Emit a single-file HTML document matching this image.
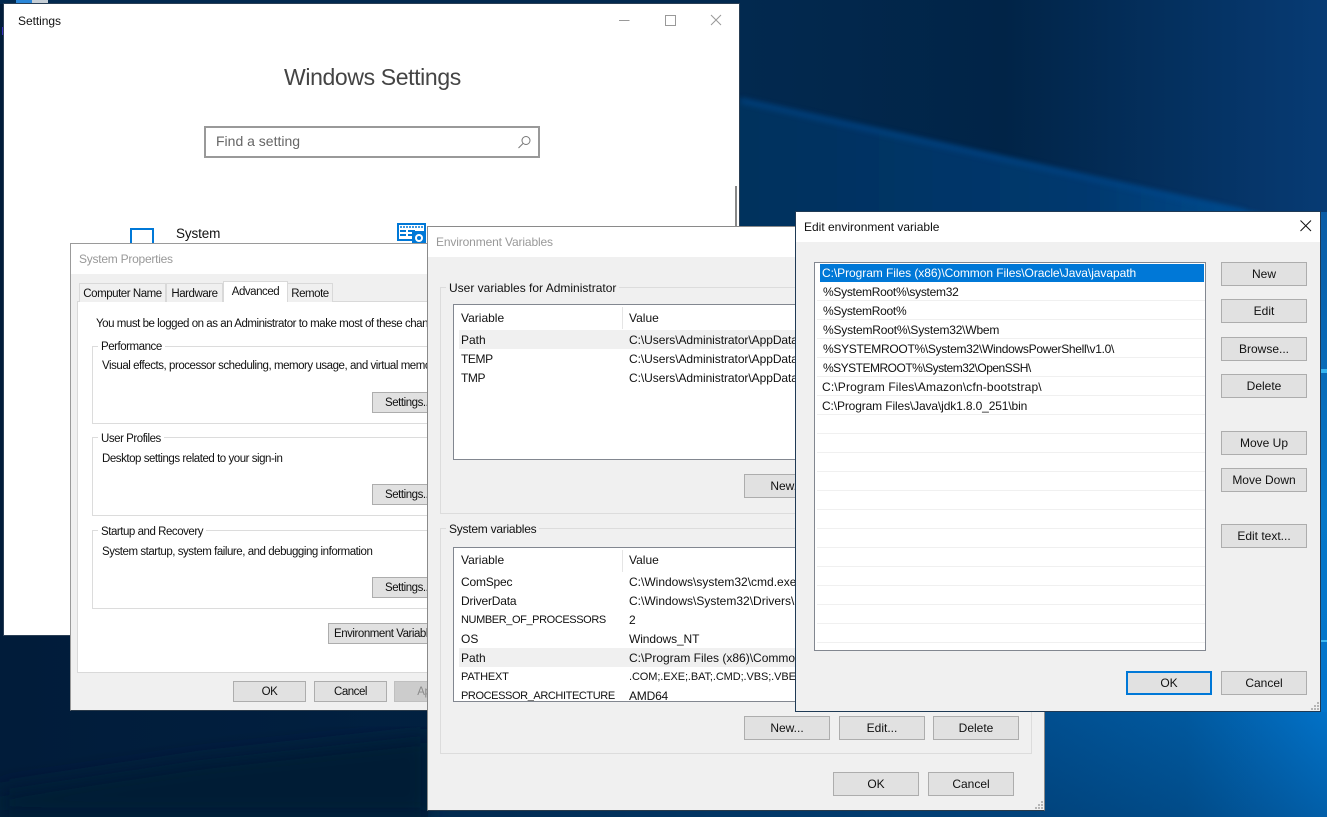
<!DOCTYPE html>
<html><head><meta charset="utf-8"><title>Windows Settings</title>
<style>
html,body{margin:0;padding:0;width:1327px;height:817px;overflow:hidden;background:#012a50}
*{box-sizing:border-box}
body{font-family:"Liberation Sans",sans-serif;font-size:12px;color:#111;position:relative}
.a{position:absolute}
.t{position:absolute;white-space:nowrap;line-height:16px;height:16px}
.win{position:absolute;background:#f0f0f0;overflow:hidden}
.btn{position:absolute;background:#e1e1e1;border:1px solid #adadad;text-align:center;white-space:nowrap;overflow:hidden;line-height:20px;color:#111}
.grp{position:absolute;border:1px solid #dcdcdc}
.lg{position:absolute;white-space:nowrap;line-height:16px;padding:0 3px;height:16px}
.list{position:absolute;background:#fff;border:1px solid #828790;overflow:hidden}
.grip{position:absolute;width:8px;height:8px;background:
 linear-gradient(#b5b5b5,#b5b5b5) 6px 0/2px 2px no-repeat,
 linear-gradient(#b5b5b5,#b5b5b5) 3px 3px/2px 2px no-repeat,
 linear-gradient(#b5b5b5,#b5b5b5) 6px 3px/2px 2px no-repeat,
 linear-gradient(#b5b5b5,#b5b5b5) 0 6px/2px 2px no-repeat,
 linear-gradient(#b5b5b5,#b5b5b5) 3px 6px/2px 2px no-repeat,
 linear-gradient(#b5b5b5,#b5b5b5) 6px 6px/2px 2px no-repeat}
.tab{position:absolute;background:#f0f0f0;border:1px solid #d9d9d9;border-bottom:0;text-align:center;line-height:18px;white-space:nowrap}
.sep{position:absolute;left:2px;width:388px;height:1px;background:#f0f0f0}
.sp .t,.sp .lg,.sp .btn,.sp .tab{font-size:11.5px;letter-spacing:-.46px}
.sp .t,.sp .lg{line-height:18px;height:18px}
.sp .lg{height:17px}
.sp .btn{line-height:21px!important}
.sp .tab{line-height:20px!important}
.sp .t.title{font-size:12px;letter-spacing:-.25px;line-height:16px;height:16px}
.cap{font-size:11px;letter-spacing:-.4px}
</style></head><body>

<svg class="a" style="left:0;top:0" width="1327" height="817" viewBox="0 0 1327 817">
<defs>
<linearGradient id="bl" x1="0" y1="0" x2="1" y2="0">
<stop offset="0" stop-color="#011c3a"/><stop offset="1" stop-color="#02294e"/></linearGradient>
<linearGradient id="top" x1="0" y1="0" x2="1" y2="0">
<stop offset="0" stop-color="#02294f"/><stop offset=".45" stop-color="#012447"/><stop offset="1" stop-color="#073b74"/></linearGradient>
<linearGradient id="low" x1="0" y1="0" x2="1" y2="0">
<stop offset="0" stop-color="#02305c"/><stop offset=".6" stop-color="#02396f"/><stop offset="1" stop-color="#05579f"/></linearGradient>
<linearGradient id="br" x1="0" y1="0" x2="1" y2="0">
<stop offset="0" stop-color="#014f90"/><stop offset=".5" stop-color="#01599f"/><stop offset="1" stop-color="#0272c8"/></linearGradient>
<linearGradient id="shade" x1="0" y1="0" x2="0" y2="1">
<stop offset="0" stop-color="#001a38" stop-opacity="0"/><stop offset="1" stop-color="#001a38" stop-opacity=".22"/></linearGradient>
<linearGradient id="rs" x1="0" y1="0" x2="0" y2="1">
<stop offset="0" stop-color="#0a5ca6"/><stop offset=".6" stop-color="#0577c8"/><stop offset="1" stop-color="#0274cc"/></linearGradient>
<linearGradient id="bs" x1="0" y1="0" x2="1" y2="0">
<stop offset="0" stop-color="#02294e"/><stop offset="1" stop-color="#02437c"/></linearGradient>
<filter id="b1"><feGaussianBlur stdDeviation="3"/></filter>
<filter id="b0" x="-5%" y="-5%" width="110%" height="110%"><feGaussianBlur stdDeviation="2"/></filter>
<filter id="b2"><feGaussianBlur stdDeviation="10"/></filter>
</defs>
<rect width="1327" height="817" fill="url(#bl)"/>
<rect x="0" y="0" width="740" height="4" fill="#02294f"/>
<rect x="740" y="0" width="587" height="240" fill="url(#top)"/>
<polygon points="730,96 1340,231 1340,250 730,250" fill="url(#low)" filter="url(#b0)"/>
<polygon points="741,98 1245,210 1245,215 741,103" fill="#05478c" opacity=".7" filter="url(#b1)"/>
<rect x="428" y="805" width="617" height="12" fill="url(#bs)"/>
<rect x="1045" y="711" width="282" height="106" fill="url(#br)"/>
<rect x="1045" y="711" width="282" height="106" fill="url(#shade)"/>
<rect x="1320" y="212" width="7" height="500" fill="url(#rs)"/>
<rect x="1321" y="369" width="6" height="4" fill="#35b4f0"/>
<rect x="1321" y="640" width="6" height="2" fill="#3fb8f0"/>
<polygon points="0,817 0,790 200,760 430,735 430,817" fill="#011a36" filter="url(#b2)"/>
</svg>

<!-- desktop fragments -->
<div class="a" style="left:16px;top:0;width:16px;height:4px;background:#2a86d8"></div>
<div class="a" style="left:32px;top:0;width:16px;height:4px;background:#c5ced6"></div>
<div class="a" style="left:2px;top:27px;width:2px;height:8px;background:#3a30c0"></div>

<!-- Settings window -->
<div class="a" style="left:3px;top:3px;width:737px;height:633px;background:#fff;border:1px solid #2a3f55"></div>
<div class="t" style="left:18px;top:13px;letter-spacing:-.05px">Settings</div>
<svg class="a" style="left:615px;top:12px" width="112" height="16" fill="none" stroke="#999" stroke-width="1">
<path d="M4 8.5H14.5"/><path d="M50.5 3.5H60.5V13.5H50.5Z"/><path d="M96 3L106 13M106 3L96 13"/></svg>
<div class="t" style="left:284px;top:63px;height:28px;line-height:28px;font-size:23px;letter-spacing:-.37px;color:#444">Windows Settings</div>
<div class="a" style="left:204px;top:126px;width:336px;height:32px;border:2px solid #999;background:#fff"></div>
<div class="t" style="left:216px;top:133px;font-size:14px;color:#666">Find a setting</div>
<svg class="a" style="left:517px;top:135px" width="15" height="15" fill="none" stroke="#777" stroke-width="1"><circle cx="9" cy="5.5" r="4"/><path d="M6 8.5L1.5 13"/></svg>
<div class="a" style="left:735px;top:186px;width:2px;height:58px;background:#888"></div>
<div class="a" style="left:130px;top:228px;width:24px;height:20px;border:2px solid #0078d7"></div>
<div class="t" style="left:176px;top:226px;font-size:13.5px;letter-spacing:-.12px;color:#111">System</div>
<svg class="a" style="left:397px;top:223px" width="32" height="22">
<path d="M1 1H28V9H20V17H1Z" fill="#fff" stroke="#0078d7" stroke-width="2"/>
<path d="M3 4H27M3 4" stroke="#0078d7" stroke-width="1.5" stroke-dasharray="2 1"/>
<path d="M3 8H9M11 8H18M3 12H9M11 12H18" stroke="#0078d7" stroke-width="2"/>
<rect x="15" y="8" width="14" height="14" fill="#0078d7"/>
<circle cx="22" cy="15" r="4" fill="#fff"/><circle cx="22" cy="15" r="2" fill="#0078d7"/>
</svg>

<!-- System Properties -->
<div class="win sp" style="left:70px;top:243px;width:360px;height:468px;border:1px solid #9a9a9a;border-bottom-color:#2a3a4a;border-right:0">
 <div class="a" style="left:0;top:0;width:360px;height:30px;background:#fff"></div>
 <div class="t title" style="left:8px;top:7px;color:#999">System Properties</div>
 <div class="a" style="left:6px;top:57px;width:360px;height:372px;background:#fff;border:1px solid #d9d9d9"></div>
 <div class="tab" style="left:8px;top:39px;width:87px;height:19px">Computer Name</div>
 <div class="tab" style="left:95px;top:39px;width:57px;height:19px">Hardware</div>
 <div class="tab" style="left:152px;top:37px;width:65px;height:21px;background:#fff;z-index:2">Advanced</div>
 <div class="tab" style="left:216px;top:39px;width:46px;height:19px">Remote</div>
 <div class="t" style="left:25px;top:71px">You must be logged on as an Administrator to make most of these changes.</div>

 <div class="grp" style="left:21px;top:102px;width:360px;height:78px"></div>
 <div class="lg" style="left:27px;top:94px;background:#fff">Performance</div>
 <div class="t" style="left:31px;top:113px">Visual effects, processor scheduling, memory usage, and virtual memory</div>
 <div class="btn" style="left:301px;top:148px;width:90px;height:21px;text-align:left;padding-left:12px">Settings...</div>

 <div class="grp" style="left:21px;top:193px;width:360px;height:79px"></div>
 <div class="lg" style="left:27px;top:186px;background:#fff">User Profiles</div>
 <div class="t" style="left:31px;top:206px">Desktop settings related to your sign-in</div>
 <div class="btn" style="left:301px;top:240px;width:90px;height:21px;text-align:left;padding-left:12px">Settings...</div>

 <div class="grp" style="left:21px;top:286px;width:360px;height:79px"></div>
 <div class="lg" style="left:27px;top:279px;background:#fff">Startup and Recovery</div>
 <div class="t" style="left:31px;top:299px">System startup, system failure, and debugging information</div>
 <div class="btn" style="left:301px;top:333px;width:90px;height:21px;text-align:left;padding-left:12px">Settings...</div>

 <div class="btn" style="left:257px;top:379px;width:130px;height:21px;text-align:left;padding-left:5px">Environment Variables...</div>
 <div class="btn" style="left:162px;top:437px;width:73px;height:21px">OK</div>
 <div class="btn" style="left:243px;top:437px;width:73px;height:21px">Cancel</div>
 <div class="btn" style="left:323px;top:437px;width:73px;height:21px;background:#ccc;border-color:#bfbfbf;color:#8a8a8a">Apply</div>
</div>

<!-- Environment Variables -->
<div class="win" style="left:427px;top:226px;width:618px;height:585px;border:1px solid #8a8a8a;border-bottom-color:#2a3a4a">
 <div class="a" style="left:0;top:0;width:618px;height:30px;background:#fff"></div>
 <div class="t" style="left:8px;top:7px;color:#999;letter-spacing:-.14px">Environment Variables</div>

 <div class="grp" style="left:12px;top:60px;width:592px;height:227px"></div>
 <div class="lg" style="left:18px;top:53px;background:#f0f0f0">User variables for Administrator</div>
 <div class="list" style="left:25px;top:77px;width:560px;height:156px">
  <div class="a" style="left:168px;top:2px;width:1px;height:22px;background:#e5e5e5"></div>
  <div class="t" style="left:7px;top:5px">Variable</div><div class="t" style="left:175px;top:5px">Value</div>
  <div class="a" style="left:5px;top:25px;width:555px;height:19px;background:#f0f0f0"></div>
  <div class="t" style="left:7px;top:27px">Path</div><div class="t" style="left:175px;top:27px;letter-spacing:-.06px">C:\Users\Administrator\AppData\Local\Microsoft\WindowsApps</div>
  <div class="t" style="left:7px;top:46px;letter-spacing:-.4px">TEMP</div><div class="t" style="left:175px;top:46px;letter-spacing:-.06px">C:\Users\Administrator\AppData\Local\Temp</div>
  <div class="t" style="left:7px;top:65px;letter-spacing:-.4px">TMP</div><div class="t" style="left:175px;top:65px;letter-spacing:-.06px">C:\Users\Administrator\AppData\Local\Temp</div>
 </div>
 <div class="btn" style="left:316px;top:247px;width:86px;height:24px;line-height:22px">New...</div>

 <div class="grp" style="left:12px;top:301px;width:592px;height:226px"></div>
 <div class="lg" style="left:18px;top:294px;background:#f0f0f0;letter-spacing:-.25px">System variables</div>
 <div class="list" style="left:25px;top:320px;width:560px;height:155px">
  <div class="a" style="left:168px;top:2px;width:1px;height:22px;background:#e5e5e5"></div>
  <div class="t" style="left:7px;top:4px">Variable</div><div class="t" style="left:175px;top:4px">Value</div>
  <div class="t" style="left:7px;top:26px;letter-spacing:-.2px">ComSpec</div><div class="t" style="left:175px;top:26px">C:\Windows\system32\cmd.exe</div>
  <div class="t" style="left:7px;top:45px;letter-spacing:-.2px">DriverData</div><div class="t" style="left:175px;top:45px">C:\Windows\System32\Drivers\DriverData</div>
  <div class="t cap" style="left:7px;top:64px">NUMBER_OF_PROCESSORS</div><div class="t" style="left:175px;top:64px">2</div>
  <div class="t" style="left:7px;top:83px">OS</div><div class="t" style="left:175px;top:83px;letter-spacing:-.1px">Windows_NT</div>
  <div class="a" style="left:5px;top:100px;width:555px;height:19px;background:#f0f0f0"></div>
  <div class="t" style="left:7px;top:102px">Path</div><div class="t" style="left:175px;top:102px">C:\Program Files (x86)\Common Files\Oracle\Java\javapath</div>
  <div class="t cap" style="left:7px;top:121px;letter-spacing:-.2px">PATHEXT</div><div class="t cap" style="left:175px;top:121px;letter-spacing:-.1px">.COM;.EXE;.BAT;.CMD;.VBS;.VBE;.JS;.JSE</div>
  <div class="t cap" style="left:7px;top:140px">PROCESSOR_ARCHITECTURE</div><div class="t" style="left:175px;top:140px;letter-spacing:-.2px">AMD64</div>
 </div>
 <div class="btn" style="left:316px;top:489px;width:86px;height:24px;line-height:22px">New...</div>
 <div class="btn" style="left:411px;top:489px;width:86px;height:24px;line-height:22px">Edit...</div>
 <div class="btn" style="left:505px;top:489px;width:86px;height:24px;line-height:22px">Delete</div>
 <div class="btn" style="left:405px;top:545px;width:86px;height:24px;line-height:22px">OK</div>
 <div class="btn" style="left:500px;top:545px;width:86px;height:24px;line-height:22px">Cancel</div>
 <div class="grip" style="left:607px;top:574px"></div>
</div>

<!-- Edit environment variable -->
<div class="win" style="left:795px;top:211px;width:526px;height:501px;border:1px solid #1f3a55">
 <div class="a" style="left:0;top:0;width:526px;height:30px;background:#fff"></div>
 <div class="t" style="left:8px;top:7px">Edit environment variable</div>
 <svg class="a" style="left:503px;top:7px" width="14" height="14" fill="none" stroke="#111" stroke-width="1"><path d="M1.5 1.5L12 12M12 1.5L1.5 12"/></svg>
 <div class="list" style="left:18px;top:50px;width:392px;height:389px">
  <div class="a" style="left:5px;top:1px;width:384px;height:18px;background:#0078d7"></div>
  <div class="t" style="left:7px;top:2px;color:#fff;letter-spacing:-.06px">C:\Program Files (x86)\Common Files\Oracle\Java\javapath</div>
  <div class="t" style="left:8px;top:21px;letter-spacing:-.28px">%SystemRoot%\system32</div>
  <div class="t" style="left:8px;top:40px;letter-spacing:-.28px">%SystemRoot%</div>
  <div class="t" style="left:8px;top:59px;letter-spacing:-.2px">%SystemRoot%\System32\Wbem</div>
  <div class="t" style="left:8px;top:78px;letter-spacing:-.29px">%SYSTEMROOT%\System32\WindowsPowerShell\v1.0\</div>
  <div class="t" style="left:8px;top:97px;letter-spacing:-.5px">%SYSTEMROOT%\System32\OpenSSH\</div>
  <div class="t" style="left:7px;top:116px;letter-spacing:.15px">C:\Program Files\Amazon\cfn-bootstrap\</div>
  <div class="t" style="left:7px;top:135px;letter-spacing:-.13px">C:\Program Files\Java\jdk1.8.0_251\bin</div>
  <div class="sep" style="top:37px"></div><div class="sep" style="top:56px"></div><div class="sep" style="top:75px"></div>
  <div class="sep" style="top:94px"></div><div class="sep" style="top:113px"></div><div class="sep" style="top:132px"></div>
  <div class="sep" style="top:151px"></div><div class="sep" style="top:170px"></div><div class="sep" style="top:189px"></div>
  <div class="sep" style="top:208px"></div><div class="sep" style="top:227px"></div><div class="sep" style="top:246px"></div>
  <div class="sep" style="top:265px"></div><div class="sep" style="top:284px"></div><div class="sep" style="top:303px"></div>
  <div class="sep" style="top:322px"></div><div class="sep" style="top:341px"></div><div class="sep" style="top:360px"></div>
  <div class="sep" style="top:379px"></div>
 </div>
 <div class="btn" style="left:425px;top:50px;width:86px;height:24px;line-height:22px">New</div>
 <div class="btn" style="left:425px;top:87px;width:86px;height:24px;line-height:22px">Edit</div>
 <div class="btn" style="left:425px;top:125px;width:86px;height:24px;line-height:22px">Browse...</div>
 <div class="btn" style="left:425px;top:162px;width:86px;height:24px;line-height:22px">Delete</div>
 <div class="btn" style="left:425px;top:219px;width:86px;height:24px;line-height:22px">Move Up</div>
 <div class="btn" style="left:425px;top:256px;width:86px;height:24px;line-height:22px">Move Down</div>
 <div class="btn" style="left:425px;top:312px;width:86px;height:24px;line-height:22px">Edit text...</div>
 <div class="btn" style="left:330px;top:459px;width:86px;height:24px;line-height:20px;border:2px solid #0078d7">OK</div>
 <div class="btn" style="left:425px;top:459px;width:86px;height:24px;line-height:22px">Cancel</div>
 <div class="grip" style="left:515px;top:490px"></div>
</div>
</body></html>
